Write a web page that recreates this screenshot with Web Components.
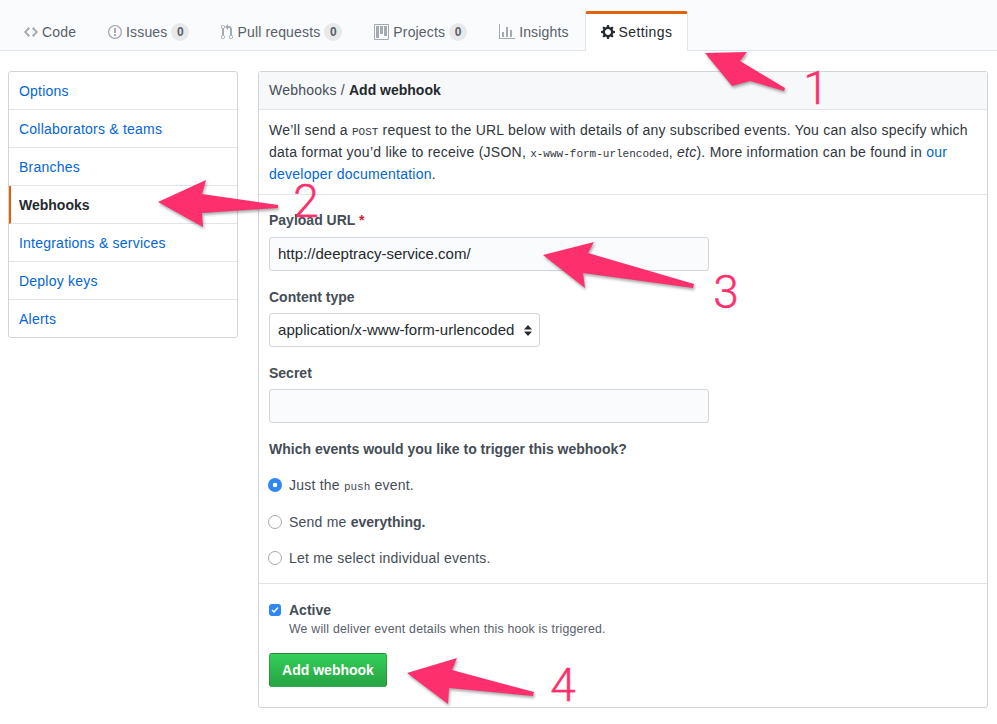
<!DOCTYPE html>
<html lang="en">
<head>
<meta charset="utf-8">
<title>Add webhook</title>
<style>
  html, body { margin: 0; background: #fff; }
  body {
    position: relative;
    height: 724px;
    overflow: hidden;
    font-family: "Liberation Sans", Arial, sans-serif;
    font-size: 14px;
    letter-spacing: .22px;
    color: #24292e;
  }
</style>
</head>
<body>
<gh-tabnav>
  <gh-tab icon="code">Code</gh-tab>
  <gh-tab icon="issue" count="0">Issues</gh-tab>
  <gh-tab icon="pull" count="0">Pull requests</gh-tab>
  <gh-tab icon="project" count="0">Projects</gh-tab>
  <gh-tab icon="graph">Insights</gh-tab>
  <gh-tab icon="gear" selected>Settings</gh-tab>
</gh-tabnav>

<settings-layout>
  <gh-menu slot="side">
    <gh-menu-item>Options</gh-menu-item>
    <gh-menu-item>Collaborators &amp; teams</gh-menu-item>
    <gh-menu-item>Branches</gh-menu-item>
    <gh-menu-item selected>Webhooks</gh-menu-item>
    <gh-menu-item>Integrations &amp; services</gh-menu-item>
    <gh-menu-item>Deploy keys</gh-menu-item>
    <gh-menu-item>Alerts</gh-menu-item>
  </gh-menu>
  <webhook-form></webhook-form>
</settings-layout>

<!-- hand drawn notes on top of the screenshot -->
<note-arrow n="1" points="705,53 747,52 740,61 785,88 784,91 750,81 732,86" nx="816" ny="104"></note-arrow>
<note-arrow n="2" points="158,202 206,180 202,194 278,205 278,208 202,213 203,227" nx="306" ny="217"></note-arrow>
<note-arrow n="3" points="543,255 594,242 588,253 694,284 693,288 583,273 585,288" nx="726" ny="308"></note-arrow>
<note-arrow n="4" points="407,673 457,658 452,670 534,692 533,696 449,688 448,704" nx="563" ny="701"></note-arrow>

<script>
const ICONS = {
  code: [14, "M9.5 3L8 4.5 11.5 8 8 11.5 9.5 13 14 8 9.5 3zm-5 0L0 8l4.5 5L6 11.5 2.5 8 6 4.5 4.5 3z"],
  issue: [14, "M7 2.3c3.14 0 5.7 2.56 5.7 5.7s-2.56 5.7-5.7 5.7A5.71 5.71 0 0 1 1.3 8c0-3.14 2.56-5.7 5.7-5.7zM7 1C3.14 1 0 4.14 0 8s3.14 7 7 7 7-3.14 7-7-3.14-7-7-7zm1 3H6v5h2V4zm0 6H6v2h2v-2z"],
  pull: [12, "M11 11.28V5c-.03-.78-.34-1.47-.94-2.06C9.46 2.35 8.78 2.03 8 2H7V0L4 3l3 3V4h1c.27.02.48.11.69.31.21.2.3.42.31.69v6.28A1.993 1.993 0 0 0 10 15a1.993 1.993 0 0 0 1-3.72zm-1 2.92c-.66 0-1.2-.55-1.2-1.2 0-.65.55-1.2 1.2-1.2.65 0 1.2.55 1.2 1.2 0 .65-.55 1.2-1.2 1.2zM4 3c0-1.11-.89-2-2-2a1.993 1.993 0 0 0-1 3.72v6.56A1.993 1.993 0 0 0 2 15a1.993 1.993 0 0 0 1-3.72V4.72c.59-.34 1-.98 1-1.72zm-.8 10c0 .66-.55 1.2-1.2 1.2-.65 0-1.2-.55-1.2-1.2 0-.65.55-1.2 1.2-1.2.65 0 1.2.55 1.2 1.2zM2 4.2C1.34 4.2.8 3.65.8 3c0-.65.55-1.2 1.2-1.2.65 0 1.2.55 1.2 1.2 0 .65-.55 1.2-1.2 1.2z"],
  project: [15, "M10 12h3V2h-3v10zm-4-2h3V2H6v8zm-4 4h3V2H2v12zm-1 1h13V1H1v14zM14 0H1a1 1 0 0 0-1 1v14a1 1 0 0 0 1 1h13a1 1 0 0 0 1-1V1a1 1 0 0 0-1-1z"],
  graph: [16, "M16 14v1H0V0h1v14h15zM5 13H3V8h2v5zm4 0H7V3h2v10zm4 0h-2V6h2v7z"],
  gear: [14, "M14 8.77v-1.6l-1.94-.64-.45-1.09.88-1.84-1.13-1.13-1.81.91-1.09-.45-.69-1.92h-1.6l-.63 1.94-1.11.45-1.84-.88-1.13 1.13.91 1.81-.45 1.09L0 7.23v1.59l1.94.64.45 1.09-.88 1.84 1.13 1.13 1.81-.91 1.09.45.69 1.92h1.59l.63-1.94 1.11-.45 1.84.88 1.13-1.13-.92-1.81.47-1.09L14 8.75v.02zM7 11c-1.66 0-3-1.34-3-3s1.34-3 3-3 3 1.34 3 3-1.34 3-3 3z"]
};

class GhTabnav extends HTMLElement {
  constructor() {
    super();
    this.attachShadow({ mode: "open" });
    this.shadowRoot.innerHTML = `
    <style>
      :host {
        display: flex;
        align-items: flex-end;
        box-sizing: border-box;
        height: 51px;
        padding: 0 8px;
        background: #fafbfc;
        border-bottom: 1px solid #e1e4e8;
      }
    </style>
    <slot></slot>`;
  }
}

class GhTab extends HTMLElement {
  constructor() {
    super();
    this.attachShadow({ mode: "open" });
  }

  connectedCallback() {
    const [w, d] = ICONS[this.getAttribute("icon")];
    const count = this.getAttribute("count");
    this.shadowRoot.innerHTML = `
    <style>
      :host {
        display: flex;
        align-items: center;
        box-sizing: border-box;
        height: 40px;
        margin-bottom: -1px;
        padding: 2px 16px 0;
        gap: 4px;
        color: #586069;
        letter-spacing: .15px;
        line-height: 20px;
      }
      :host([selected]) {
        padding: 0 15px 1px;
        background: #fff;
        color: #24292e;
        letter-spacing: .4px;
        border: 1px solid #e1e4e8;
        border-top: 3px solid #e36209;
        border-bottom: 0;
        border-radius: 3px 3px 0 0;
      }
      svg { fill: #a3aab1; flex: none; }
      :host([selected]) svg { fill: #24292e; }
      .count {
        min-width: 18px;
        box-sizing: border-box;
        padding: 3px 5px;
        border-radius: 20px;
        background: rgba(27,31,35,.08);
        font-size: 12px;
        font-weight: 600;
        letter-spacing: 0;
        line-height: 12px;
        text-align: center;
      }
    </style>
    <svg width="${w}" height="16" viewBox="0 0 ${w} 16"><path fill-rule="evenodd" d="${d}"/></svg>
    <slot></slot>
    ${count === null ? "" : `<span class="count">${count}</span>`}`;
  }
}

class SettingsLayout extends HTMLElement {
  constructor() {
    super();
    this.attachShadow({ mode: "open" });
    this.shadowRoot.innerHTML = `
    <style>
      :host {
        display: grid;
        grid-template-columns: 230px 730px;
        gap: 20px;
        align-items: start;
        padding: 20px 8px 0;
      }
    </style>
    <slot name="side"></slot>
    <slot></slot>`;
  }
}

class GhMenu extends HTMLElement {
  constructor() {
    super();
    this.attachShadow({ mode: "open" });
    this.shadowRoot.innerHTML = `
    <style>
      :host {
        display: block;
        border: 1px solid #d1d5da;
        border-radius: 3px;
        overflow: hidden;
        background: #fff;
      }
    </style>
    <slot></slot>`;
  }
}

class GhMenuItem extends HTMLElement {
  constructor() {
    super();
    this.attachShadow({ mode: "open" });
    this.shadowRoot.innerHTML = `
    <style>
      :host {
        display: block;
        box-sizing: border-box;
        height: 38px;
        padding: 9px 10px 0;
        border-bottom: 1px solid #e1e4e8;
        color: #0366d6;
        line-height: 20px;
      }
      :host(:last-child) { border-bottom: 0; height: 37px; }
      :host([selected]) {
        padding-left: 8px;
        border-left: 2px solid #e36209;
        color: #24292e;
        font-weight: 700;
        letter-spacing: 0;
      }
    </style>
    <slot></slot>`;
  }
}

class WebhookForm extends HTMLElement {
  constructor() {
    super();
    this.attachShadow({ mode: "open" });
    this.shadowRoot.innerHTML = `
    <style>
      :host {
        display: block;
        box-sizing: border-box;
        height: 637px;
        border: 1px solid #d1d5da;
        border-radius: 3px;
        background: #fff;
        color: #24292e;
        line-height: 22px;
      }
      header {
        height: 38px;
        box-sizing: border-box;
        padding: 8px 10px 0;
        background: #f6f8fa;
        border-bottom: 1px solid #e1e4e8;
        color: #444d56;
        line-height: 20px;
      }
      header b { color: #24292e; letter-spacing: 0; }
      .intro {
        height: 85px;
        box-sizing: border-box;
        padding: 9px 10px 0;
        border-bottom: 1px solid #e1e4e8;
        color: #2f363d;
        letter-spacing: .24px;
        white-space: nowrap;
      }
      a { color: #0366d6; text-decoration: none; }
      code { font-family: "Liberation Mono", "DejaVu Sans Mono", monospace; font-size: 11px; line-height: 0; letter-spacing: 0; }
      .fields { padding: 15px 10px 0; height: 389px; box-sizing: border-box; border-bottom: 1px solid #e1e4e8; }
      .field { height: 76px; box-sizing: border-box; }
      label, .q { display: block; font-weight: 700; letter-spacing: 0; color: #444d56; line-height: 20px; margin-bottom: 7px; }
      .field + .field { padding-top: 1px; }
      .field + .field label { margin-bottom: 6px; }
      .q { padding-top: 1px; }
      .req { color: #cb2431; }
      input[type=text] {
        display: block;
        box-sizing: border-box;
        width: 440px;
        height: 34px;
        padding: 5px 8px 7px;
        margin: 0;
        border: 1px solid #d1d5da;
        border-radius: 3px;
        background: #fafbfc;
        font: 15px/20px "Liberation Sans", Arial, sans-serif;
        color: #24292e;
        outline: 0;
      }
      .select { position: relative; width: 271px; height: 34px; }
      select {
        appearance: none;
        box-sizing: border-box;
        width: 271px;
        height: 34px;
        margin: 0;
        padding: 0 8px 2px;
        border: 1px solid #d1d5da;
        border-radius: 3px;
        background: #fff;
        font: 15px "Liberation Sans", Arial, sans-serif;
        letter-spacing: .04px;
        color: #24292e;
      }
      .select svg { position: absolute; right: 8px; top: 12px; }
      .radios { margin-top: 15px; display: grid; row-gap: 14.5px; }
      .radio { display: flex; align-items: center; gap: 7px; height: 22px; color: #444d56; }
      .radio b { font-weight: 700; letter-spacing: 0; }
      .radio code { color: #444d56; }
      input[type=radio] {
        appearance: none;
        width: 14px;
        height: 14px;
        margin: 0 0 0 -1px;
        border: 1px solid #a8a8a8;
        border-radius: 50%;
        background: #fff;
        flex: none;
      }
      input[type=radio]:checked {
        border: 0;
        background: radial-gradient(circle, #fff 0 2px, #2f86f7 2.6px);
      }
      .foot { padding: 16px 10px 0; }
      .active { display: grid; grid-template-columns: 20px 1fr; }
      input[type=checkbox] {
        appearance: none;
        position: relative;
        width: 12px;
        height: 12px;
        margin: 4px 0 0;
        border-radius: 3px;
        background: #2f86f7;
      }
      .check { position: absolute; left: 2px; top: 6px; }
      .box { position: relative; height: 20px; }
      .active strong { color: #444d56; line-height: 20px; letter-spacing: 0; }
      .note { grid-column: 2; color: #586069; font-size: 12.3px; line-height: 18px; }
      button {
        display: block;
        box-sizing: border-box;
        width: 118px;
        height: 34px;
        margin: 15px 0 0;
        padding: 0;
        border: 1px solid rgba(27,31,35,.2);
        border-radius: 3px;
        background: linear-gradient(#34d058, #28a745 90%);
        color: #fff;
        font: 700 14px "Liberation Sans", Arial, sans-serif;
      }
    </style>
    <header>Webhooks / <b>Add webhook</b></header>
    <div class="intro">We’ll send a <code>POST</code> request to the URL below with details of any subscribed events. You can also specify which<br>data format you’d like to receive (JSON, <code>x-www-form-urlencoded</code>, <em>etc</em>). More information can be found in <a href="#">our</a><br><a href="#">developer documentation</a>.</div>
    <div class="fields">
      <div class="field">
        <label>Payload URL <span class="req">*</span></label>
        <input type="text" value="http://deeptracy-service.com/">
      </div>
      <div class="field">
        <label>Content type</label>
        <div class="select">
          <select><option>application/x-www-form-urlencoded</option></select>
          <svg width="8" height="11" viewBox="0 0 8 11"><path fill="#24292e" d="M4 0l4 4.500H0zM4 11L0 6.500h8z"/></svg>
        </div>
      </div>
      <div class="field">
        <label>Secret</label>
        <input type="text">
      </div>
      <div class="q">Which events would you like to trigger this webhook?</div>
      <div class="radios">
        <div class="radio"><input type="radio" name="ev" checked><span>Just the <code>push</code> event.</span></div>
        <div class="radio"><input type="radio" name="ev"><span>Send me <b>everything.</b></span></div>
        <div class="radio"><input type="radio" name="ev"><span>Let me select individual events.</span></div>
      </div>
    </div>
    <div class="foot">
      <div class="active">
        <div class="box">
          <input type="checkbox" checked>
          <svg class="check" width="8" height="8" viewBox="0 0 8 8"><path fill="none" stroke="#fff" stroke-width="1.500" d="M1 4l2 2 4-4.500"/></svg>
        </div>
        <strong>Active</strong>
        <div class="note">We will deliver event details when this hook is triggered.</div>
      </div>
      <button>Add webhook</button>
    </div>`;
  }
}

class NoteArrow extends HTMLElement {
  constructor() {
    super();
    this.attachShadow({ mode: "open" });
  }

  connectedCallback() {
    const nx = this.getAttribute("nx");
    const ny = this.getAttribute("ny");
    this.shadowRoot.innerHTML = `
    <style>
      :host { position: absolute; inset: 0; display: block; pointer-events: none; }
      svg { position: absolute; left: 0; top: 0; }
      polygon { fill: #fd2f6c; filter: drop-shadow(1px 2px 1.5px rgba(0,0,0,.35)); }
      text { fill: #fd2f6c; stroke: #fd2f6c; stroke-width: .4px; font: 300 46px Roboto, "Liberation Sans", sans-serif; letter-spacing: 0; text-anchor: middle; }
    </style>
    <svg width="997" height="724" viewBox="0 0 997 724">
      <polygon points="${this.getAttribute("points")}"/>
      <text x="${nx}" y="${ny}">${this.getAttribute("n")}</text>
    </svg>`;
  }
}

customElements.define("gh-tabnav", GhTabnav);
customElements.define("gh-tab", GhTab);
customElements.define("settings-layout", SettingsLayout);
customElements.define("gh-menu", GhMenu);
customElements.define("gh-menu-item", GhMenuItem);
customElements.define("webhook-form", WebhookForm);
customElements.define("note-arrow", NoteArrow);
</script>
</body>
</html>
